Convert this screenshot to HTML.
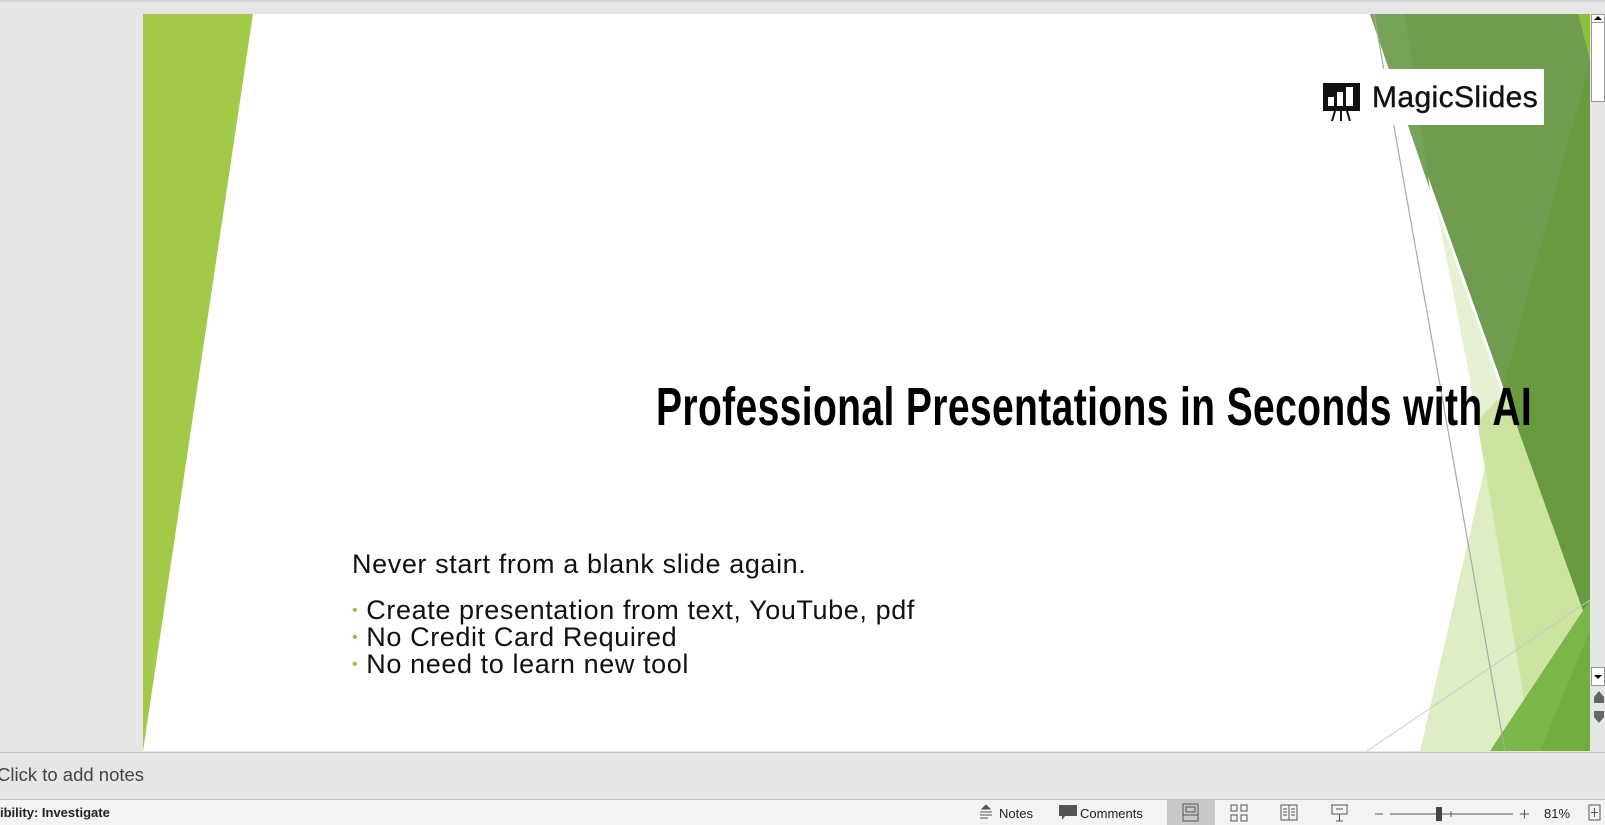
<!DOCTYPE html>
<html><head><meta charset="utf-8"><style>
*{margin:0;padding:0;box-sizing:border-box}
body{width:1605px;height:825px;overflow:hidden;background:#e6e6e6;font-family:"Liberation Sans",sans-serif;position:relative}
.abs{position:absolute}
</style></head><body>
<div class="abs" style="left:0;top:0;width:1605px;height:2px;background:#d4d4d4"></div>
<div class="abs" style="left:143px;top:14px;width:1447px;height:737px;background:#fff"></div>
<svg class="abs" style="left:0;top:0" width="1605" height="825">
<polygon points="143,14 253,14 143,751" fill="#a2ca48"/>
<polygon points="1505,380 1420,751 1590,751 1590,600" fill="#dfedc4"/>
<polygon points="1470,380 1533,751 1590,751 1590,625 1517,400" fill="#cde3a0"/>
<polygon points="1437,210 1503,395 1478,420" fill="#e6f1d3"/>
<polygon points="1370,14 1590,14 1590,630" fill="#709c50"/>
<polygon points="1370,14 1405,14 1430,190" fill="#76a25a"/>
<polygon points="1590,60 1503,387 1590,630" fill="#6a9a40"/>
<polygon points="1578,14 1590,14 1590,60" fill="#8cbf3a"/>
<polygon points="1590,600 1490,751 1590,751" fill="#7ab648"/>
<polygon points="1590,630 1540,751 1590,751" fill="#72ad40"/>
<line x1="1374" y1="14" x2="1505" y2="751" stroke="#a8a8a8" stroke-width="1.2"/>
<line x1="1367" y1="751" x2="1590" y2="600" stroke="#c8c8c8" stroke-width="1"/>
</svg>
<div class="abs" style="left:1320px;top:69px;width:224px;height:56px;background:#fff"></div>
<svg class="abs" style="left:1322px;top:82px" width="40" height="40" viewBox="0 0 40 40">
<rect x="1" y="1" width="37" height="28" fill="#111"/>
<rect x="6" y="15" width="6" height="9" fill="#fff"/>
<rect x="15" y="10" width="6" height="14" fill="#fff"/>
<rect x="24" y="5" width="7" height="19" fill="#fff"/>
<path d="M13 29 L10 39 M19 29 L19 39 M25 29 L28 39" stroke="#111" stroke-width="2"/>
</svg>
<div class="abs" style="left:1372px;top:81px;font-size:30px;color:#111;white-space:nowrap;letter-spacing:0.4px;-webkit-text-stroke:0.4px #111">MagicSlides</div>
<div class="abs" style="left:656px;top:377px;width:900px;height:60px;white-space:nowrap;text-align:left">
<span style="display:inline-block;font-weight:bold;font-size:54px;line-height:60px;color:#000;transform:scaleX(0.723);transform-origin:left top;letter-spacing:0.5px">Professional Presentations in Seconds with AI</span></div>
<div class="abs" style="left:352px;top:549px;font-size:27px;color:#111;line-height:30px;white-space:nowrap;letter-spacing:0.6px">Never start from a blank slide again.</div>
<div class="abs" style="left:352px;top:597px;font-size:27px;color:#111;line-height:27px;white-space:nowrap;letter-spacing:0.6px">
<div><span style="color:#8cc63f;font-size:16px;vertical-align:4px">•</span> Create presentation from text, YouTube, pdf</div>
<div><span style="color:#8cc63f;font-size:16px;vertical-align:4px">•</span> No Credit Card Required</div>
<div><span style="color:#8cc63f;font-size:16px;vertical-align:4px">•</span> No need to learn new tool</div>
</div>
<div class="abs" style="left:1591px;top:14px;width:14px;height:737px;background:#e6e6e6"></div>
<div class="abs" style="left:1591px;top:14px;width:14px;height:9px;background:#fff;border:1px solid #999"></div>
<div class="abs" style="left:1594px;top:16px;width:0;height:0;border-left:4px solid transparent;border-right:4px solid transparent;border-bottom:4px solid #000"></div>
<div class="abs" style="left:1591px;top:22px;width:14px;height:80px;background:#fff;border:1px solid #999"></div>
<div class="abs" style="left:1591px;top:667px;width:14px;height:19px;background:#fff;border:1px solid #999"></div>
<div class="abs" style="left:1594px;top:675px;width:0;height:0;border-left:4px solid transparent;border-right:4px solid transparent;border-top:4px solid #000"></div>
<div class="abs" style="left:1594px;top:691px;width:0;height:0;border-left:5px solid transparent;border-right:5px solid transparent;border-bottom:6px solid #666"></div>
<div class="abs" style="left:1594px;top:697px;width:10px;height:6px;background:#666"></div>
<div class="abs" style="left:1594px;top:711px;width:10px;height:6px;background:#666"></div>
<div class="abs" style="left:1594px;top:717px;width:0;height:0;border-left:5px solid transparent;border-right:5px solid transparent;border-top:6px solid #666"></div>
<div class="abs" style="left:0;top:752px;width:1605px;height:48px;background:#e6e6e6;border-top:1px solid #c6c6c6"></div>
<div class="abs" style="left:-3px;top:764px;font-size:18.5px;color:#444;white-space:nowrap">Click to add notes</div>
<div class="abs" style="left:0;top:799px;width:1605px;height:26px;background:#f3f3f3;border-top:1px solid #c6c6c6"></div>
<div class="abs" style="left:0;top:805px;font-size:13px;font-weight:bold;color:#222;white-space:nowrap">ibility: Investigate</div>
<div class="abs" style="left:1167px;top:800px;width:48px;height:25px;background:#c8c8c8"></div>
<svg class="abs" style="left:0;top:800px" width="1605" height="25">
<g stroke="#555" fill="none" stroke-width="1">
<path d="M986 5 L990 9 L982 9 Z" fill="#555"/>
<path d="M980 12 H992 M980 15 H992 M980 18 H988"/>
<path d="M1183 4 H1198 V21 H1183 Z M1186 7 H1195 V12 H1186 Z M1183 15 H1198"/>
<path d="M1231 5 H1237 V11 H1231 Z M1241 5 H1247 V11 H1241 Z M1231 15 H1237 V21 H1231 Z M1241 15 H1247 V21 H1241 Z"/>
<path d="M1281 5 H1297 V20 H1281 Z M1289 5 V20 M1283 9 H1287 M1283 12 H1287 M1283 15 H1287 M1291 9 H1295 M1291 12 H1295 M1291 15 H1295"/>
<path d="M1331 5 H1348 M1332 5 V14 H1347 V5 M1336 9 H1343 M1339.5 14 V21 M1336 21 H1343"/>
<path d="M1375 14 H1383 M1390 14 H1513 M1451 11 V17 M1520 14 H1529 M1524.5 9.5 V18.5"/>
<path d="M1589 5 H1600 V20 H1589 Z M1594.5 8 V17 M1591 12.5 H1598"/>
</g>
<rect x="1436" y="7" width="6" height="14" fill="#444"/>
<path d="M1059 5 H1077 V16 H1065 L1062 20 V16 H1059 Z" fill="#555"/>
</svg>
<div class="abs" style="left:999px;top:806px;font-size:13px;color:#222">Notes</div>
<div class="abs" style="left:1080px;top:806px;font-size:13px;color:#222">Comments</div>
<div class="abs" style="left:1544px;top:806px;font-size:13px;color:#222">81%</div>
</body></html>
